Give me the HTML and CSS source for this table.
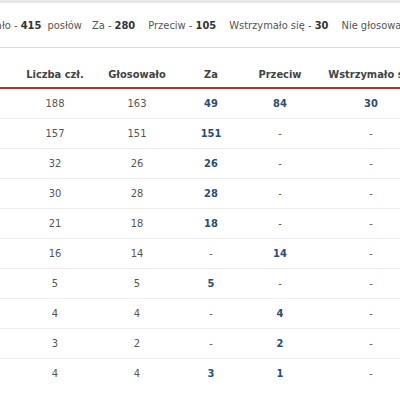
FILE: index.html
```html
<!DOCTYPE html>
<html lang="pl">
<head>
<meta charset="utf-8">
<link rel="stylesheet" href="styles.css">
</head>
<body>
<div class="page">
  <div class="summary">
    <span class="first">Głosowało - <b>415</b> posłów</span>
    <span>Za - <b>280</b></span>
    <span>Przeciw - <b>105</b></span>
    <span>Wstrzymało się - <b>30</b></span>
    <span>Nie głosowało - <b>45</b> posłów</span>
  </div>
  <table class="votes">
    <colgroup>
      <col class="c-party"><col class="c-num"><col class="c-voted"><col class="c-za"><col class="c-prz"><col class="c-wstrz">
    </colgroup>
    <thead>
      <tr><th></th><th>Liczba czł.</th><th>Głosowało</th><th>Za</th><th>Przeciw</th><th>Wstrzymało się</th></tr>
    </thead>
    <tbody>
      <tr><td></td><td>188</td><td>163</td><td class="v">49</td><td class="v">84</td><td class="v">30</td></tr>
      <tr><td></td><td>157</td><td>151</td><td class="v">151</td><td>-</td><td>-</td></tr>
      <tr><td></td><td>32</td><td>26</td><td class="v">26</td><td>-</td><td>-</td></tr>
      <tr><td></td><td>30</td><td>28</td><td class="v">28</td><td>-</td><td>-</td></tr>
      <tr><td></td><td>21</td><td>18</td><td class="v">18</td><td>-</td><td>-</td></tr>
      <tr><td></td><td>16</td><td>14</td><td>-</td><td class="v">14</td><td>-</td></tr>
      <tr><td></td><td>5</td><td>5</td><td class="v">5</td><td>-</td><td>-</td></tr>
      <tr><td></td><td>4</td><td>4</td><td>-</td><td class="v">4</td><td>-</td></tr>
      <tr><td></td><td>3</td><td>2</td><td>-</td><td class="v">2</td><td>-</td></tr>
      <tr class="last"><td></td><td>4</td><td>4</td><td class="v">3</td><td class="v">1</td><td>-</td></tr>
    </tbody>
  </table>
</div>
</body>
</html>
```
FILE: styles.css
```css
html, body {
  margin: 0;
  padding: 0;
  background: #fff;
  overflow: hidden;
}
body {
  width: 400px;
  height: 400px;
  font-family: "DejaVu Sans Condensed", "DejaVu Sans", sans-serif;
  font-size: 11px;
  color: #555;
}
.page {
  border-top: 3px solid #e8e8e8;
  margin-left: -60px;
  width: 484px;
}
.summary {
  display: flex;
  gap: 13px;
  height: 44px;
  align-items: center;
  padding-left: 20px;
  border-bottom: 1px solid #dcdcdc;
  white-space: nowrap;
}
.summary .first {
  margin-right: -3px;
}
.summary .first b {
  margin-right: 3px;
}
.summary b {
  color: #333;
}
.votes {
  border-collapse: collapse;
  table-layout: fixed;
  width: 484px;
}
.c-party { width: 76px; }
.c-num { width: 78px; }
.c-voted { width: 86px; }
.c-za { width: 62px; }
.c-prz { width: 76px; }
.c-wstrz { width: 106px; }
.votes th {
  height: 40px;
  padding: 14px 0 0;
  box-sizing: border-box;
  font-weight: bold;
  color: #444;
  text-align: center;
  border-bottom: 2px solid #b5322e;
  white-space: nowrap;
}
.votes td {
  height: 29px;
  padding: 0;
  text-align: center;
  border-bottom: 1px solid #ededed;
}
.votes tr.last td {
  border-bottom: none;
}
.votes td.v {
  color: #2d4d72;
  font-weight: bold;
}
```
